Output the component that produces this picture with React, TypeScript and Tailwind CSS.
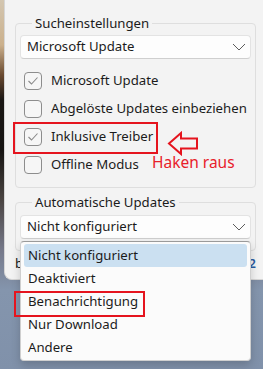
import React from 'react';

const font = { fontFamily: '"Noto Sans", "Open Sans", sans-serif' };

const Chevron: React.FC = () => (
    <svg width="14" height="8" viewBox="0 0 14 8" fill="none">
        <path d="M1 1 L7 7 L13 1" stroke="#5c5c5c" strokeWidth="1" />
    </svg>
);

const Combo: React.FC<{ value: string }> = ({ value }) => (
    <div className="h-[24px] flex items-center justify-between pl-[6px] pr-[4px] bg-[#fdfdfd] border border-[#e3e3e3] border-b-[#cfcfcf] rounded-[4px] text-[13.2px] text-[#1b1b1b]">
        <span className="whitespace-nowrap">{value}</span>
        <Chevron />
    </div>
);

const Check: React.FC<{ label: string; checked?: boolean }> = ({ label, checked }) => (
    <div className="h-[28px] flex items-center pl-[4px] gap-[9px] text-[13.2px] text-[#1b1b1b]">
        <div className="shrink-0 w-[18px] h-[18px] rounded-[4px] border border-[#8d8d8d] bg-[#f6f6f6] flex items-center justify-center">
            {checked && (
                <svg width="12" height="10" viewBox="0 0 12 10" fill="none">
                    <path d="M1.5 5 L4.5 8 L10.5 1.5" stroke="#8a8a8a" strokeWidth="1.1" />
                </svg>
            )}
        </div>
        <span className="whitespace-nowrap">{label}</span>
    </div>
);

export default function App() {
    const options = ['Nicht konfiguriert', 'Deaktiviert', 'Benachrichtigung', 'Nur Download', 'Andere'];

    return (
        <div
            className="relative w-[263px] h-[369px] overflow-hidden bg-[linear-gradient(to_bottom,#d3c6b0_0px,#cbb08c_45px,#6a4a30_75px,#1a1614_100px,#161412_150px,#4a4442_200px,#76798a_250px,#8495ad_290px,#8091aa_369px)]"
            style={font}
        >
            {/* Window */}
            <div className="ml-[4px] h-[280px] bg-[#f3f3f3] rounded-bl-[8px] border-l border-b border-[#d6d6d6] pt-[14px] pl-[10px] pr-[7px]">
                <fieldset className="border border-[#dedede] rounded-[4px] px-[4px] pb-[8px]">
                    <legend className="ml-[12px] px-[3px] text-[13.2px] leading-[19px] text-[#1b1b1b]">Sucheinstellungen</legend>
                    <div className="mt-[2px] mb-[8px]">
                        <Combo value="Microsoft Update" />
                    </div>
                    <Check label="Microsoft Update" checked />
                    <Check label="Abgelöste Updates einbeziehen" />
                    <Check label="Inklusive Treiber" checked />
                    <Check label="Offline Modus" />
                </fieldset>

                <fieldset className="mt-[5px] border border-[#dedede] rounded-[4px] px-[4px] pb-[11px]">
                    <legend className="ml-[12px] px-[3px] text-[13.2px] leading-[19px] text-[#1b1b1b]">Automatische Updates</legend>
                    <div className="mt-[3px]">
                        <Combo value="Nicht konfiguriert" />
                    </div>
                </fieldset>

                <div className="mt-[4px] flex justify-between text-[13px] leading-[16px]">
                    <span className="text-[#1b1b1b]">b</span>
                    <span className="text-[#2a5aa0] font-semibold">2</span>
                </div>
            </div>

            {/* Dropdown list */}
            <div className="absolute left-[20px] top-[241px] w-[231px] bg-[#fbfbfb] border border-[#cfcfcf] border-t-[#9a9a9a] rounded-[4px] shadow-[0_4px_10px_rgba(0,0,0,0.18)] px-[3px] pt-[2px] pb-[1px]">
                {options.map((o, i) => (
                    <div
                        key={o}
                        className={`h-[23px] flex items-center pl-[4px] rounded-[3px] text-[13.2px] text-[#1b1b1b] ${i === 0 ? 'bg-[#cbe0f1]' : ''}`}
                    >
                        {o}
                    </div>
                ))}
            </div>

            {/* Annotations */}
            <div className="absolute left-[13px] top-[122px] w-[145px] h-[32px] border-2 border-[#e5141e]" />
            <div className="absolute left-[14px] top-[291px] w-[131px] h-[26px] border-2 border-[#e5141e]" />
            <svg className="absolute left-[167px] top-[131px]" width="32" height="25" viewBox="0 0 32 25" fill="none">
                <path d="M2 12.5 L14 2 L14 7.5 L30 7.5 L30 17.5 L14 17.5 L14 23 Z" stroke="#e5141e" strokeWidth="2" strokeLinejoin="miter" />
            </svg>
            <div className="absolute left-[152px] top-[152px] text-[15.5px] leading-[20px] text-[#e8202a]">Haken raus</div>
        </div>
    );
}
